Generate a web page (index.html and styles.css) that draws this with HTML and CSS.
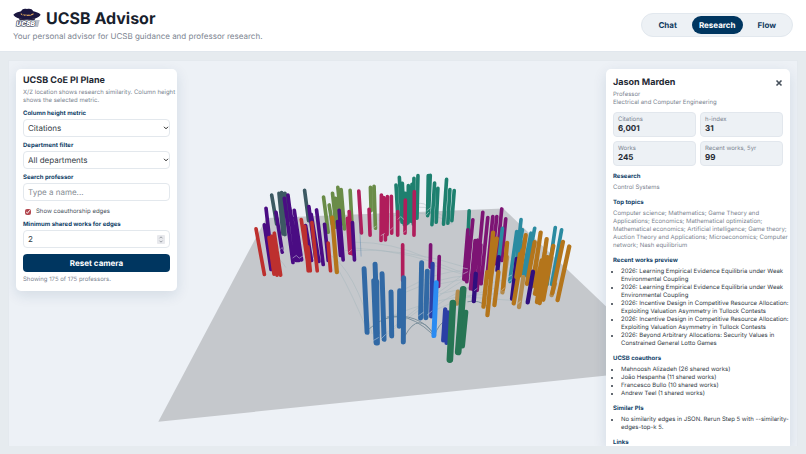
FILE: index.html
```html
<!DOCTYPE html>
<html lang="en">
<head>
<meta charset="utf-8">
<meta name="viewport" content="width=device-width, initial-scale=1">
<title>UCSB Advisor</title>
<link rel="stylesheet" href="styles.css">
</head>
<body>
<header class="topbar">
  <div class="brand">
    <div class="brand-row">
      <svg class="logo" viewBox="0 0 84 60" aria-hidden="true">
        <path d="M1 20C8 13 19 12 24 10C28 2 34 1 42 3C50 1 57 2 61 10C68 12 78 14 83 20C78 29 63 34 42 34C21 34 6 29 1 20Z" fill="#1b1740"/>
        <path d="M23 16Q42 25 62 16L61 20Q42 28 24 20Z" fill="#d9a25b"/>
        <path d="M28 18l4 5M38 21l3 4M50 21l4-4" stroke="#1b1740" stroke-width="3"/>
        <path d="M18 30Q42 38 67 30L64 38H20Z" fill="#2a2340"/>
        <path d="M12 36H80L75 57H7Z" fill="#b9c0cb"/>
        <text x="10" y="54" class="logo-text">UCSB</text>
      </svg>
      <h1>UCSB Advisor</h1>
    </div>
    <p class="tagline">Your personal advisor for UCSB guidance and professor research.</p>
  </div>
  <nav class="tabs" aria-label="Sections">
    <a href="#chat">Chat</a>
    <a href="#research" class="active" aria-current="page">Research</a>
    <a href="#flow">Flow</a>
  </nav>
</header>

<main class="stage">
  <svg class="scene" viewBox="-392 -300 2370 1158" preserveAspectRatio="xMidYMid slice" role="img" aria-label="Professor columns on a similarity plane">
    <path class="ground" d="M57 785L382 172L1095 144L1580 606L1580 628Z"/>
    <g class="edges">
      <path d="M600 330Q640 400 685 510M570 280Q650 330 700 520M620 270Q800 260 980 320M640 262Q820 270 980 340M650 245Q760 245 860 290M735 530Q900 400 1000 345M740 520Q860 420 985 335M790 400Q900 350 990 345M800 385Q900 330 980 330M850 470Q930 400 1020 370M860 465Q940 420 1080 380M730 480Q900 400 1090 400M720 180Q850 130 940 190M780 180Q860 80 880 170M800 160Q850 110 930 180M440 320Q410 270 390 310M905 370L1010 350M905 400L1090 360M870 310L1000 350M990 410L1120 420"/>
      <path class="edge-dark" d="M692 505Q780 425 880 520M745 470Q840 455 886 522M800 525Q840 450 886 522M888 525Q900 490 922 480M988 424Q1020 416 1050 440"/>
    </g>
    <g class="slate"><path d="M398 103L413 190M420 98L432 220M428 96L438 222M438 98L448 180M497 89L509 180"/></g>
    <g class="teal"><path d="M772 73L778 178M782 50L790 185M791 68L797 192M800 98L803 190M809 75L808 187M820 71L818 182M826 53L824 190M838 45L835 173M869 45L867 165M875 44L870 158M888 67L880 192M898 83L893 185M924 56L915 191M934 87L928 188M947 90L940 180M992 151L988 240"/></g>
    <g class="olive"><path d="M554 109L568 215M571 133L580 190M581 98L592 200M590 113L598 190M597 80L608 190M607 87L617 205M634 89L640 200M695 80L697 150M706 77L710 203"/></g>
    <g class="crimson"><path d="M660 91L668 217M691 146L694 224M728 103L727 240M735 111L735 215M741 115L740 238M746 108L745 222M758 107L759 218M777 153L777 224M800 118L799 218M827 93L826 224M631 153L641 280M626 173L633 278M792 253L792 360"/></g>
    <g class="purple"><path d="M381 143L402 328M376 193L396 327M411 155L430 275M436 113L462 306M447 103L472 300M452 140L480 300M458 170L474 300M466 149L488 298M510 138L530 290M517 161L540 303M533 148L553 312M500 195L518 300M557 191L568 300M601 149L613 298M596 183L605 285M641 186L647 298"/></g>
    <g class="red"><path d="M351 205L376 342M390 231L405 341M398 227L414 344M406 218L425 344M487 177L510 331M497 197L508 331M507 259L514 331M519 186L535 331M568 248L575 331"/></g>
    <g class="amber"><path d="M580 171L594 335"/></g>
    <g class="violet"><path d="M876 253L875 320M902 288L900 378"/></g>
    <g class="blue wide"><path d="M783 391L782 498M757 395L759 527M709 311L716 520M730 340L736 537M676 325L685 516M705 361L712 548M714 363L716 548M795 352L794 545M849 307L846 473M866 332L862 472"/></g>
    <g class="blue"><path d="M661 166L667 287"/></g>
    <g class="indigo"><path d="M882 310L878 468M920 447L914 540M928 456L924 548"/></g>
    <g class="bright wide"><path d="M893 367L886 526"/></g>
    <g class="violet"><path d="M1033 155L1020 300M1003 178L985 364M988 208L976 356M994 230L980 358M1048 171L1032 330M1063 168L1046 345M1075 168L1058 330M1090 145L1074 310M1102 175L1090 300M1010 240L996 385M1018 239L1004 388M1027 253L1016 390M1040 251L1028 370"/></g>
    <g class="cyan"><path d="M1148 177L1136 290M1135 213L1114 363M1152 208L1128 345M1158 240L1136 345M1092 203L1082 290M1189 203L1162 345M1178 218L1154 340M1251 201L1226 372M1270 208L1240 372"/></g>
    <g class="navy"><path d="M1081 290L1077 330M1135 295L1121 415M1012 340L1006 422"/></g>
    <g class="tan"><path d="M958 394L955 430M1106 290L1092 396M1155 350L1142 440M1219 380L1207 410M1250 370L1240 404"/></g>
    <g class="amber"><path d="M1064 216L1052 350M1075 234L1058 350M1106 247L1094 385M1060 330L1047 464M1046 335L1035 439M1080 335L1068 434M1162 224L1144 345M1145 280L1134 350M1152 270L1126 429M1207 216L1184 375M1189 245L1166 370M1203 245L1181 378M1210 300L1190 400M1225 236L1200 416M1219 276L1196 425M1228 290L1204 428M1245 256L1215 418M1274 244L1242 398M1293 258L1258 419"/></g>
    <g class="navy"><path d="M1184 334L1168 426"/></g>
    <g class="green broad"><path d="M974 387L959 575M943 428L934 598"/></g>
    <g class="green wide"><path d="M982 456L972 557"/></g>
    <g class="specks">
      <path d="M462 292l10-7l9 8l12-7M420 270l10-9l5 12M630 275l8-7M700 205l12-8M727 225l10-6M755 208l8-7M778 176l8-8l9 8M795 216l6-5M865 150l10-8M862 164l8-9M972 322l15 3M975 340l12-6M1008 390l8-6M1108 350l12-6M1108 366l10-8M1090 390l8-7M1138 430l9-8M705 540l14-8M728 535l12-12M840 466l14-10M866 464l14-12"/>
    </g>
  </svg>

  <form class="panel controls">
    <h2>UCSB CoE PI Plane</h2>
    <p class="muted intro">X/Z location shows research similarity. Column height shows the selected metric.</p>
    <label class="caption" for="metric">Column height metric</label>
    <div class="field">
      <select id="metric"><option>Citations</option><option>h-index</option><option>Works</option></select>
      <svg class="chevron" viewBox="0 0 6 4" aria-hidden="true"><path d="M1 .8L3 2.8L5 .8"/></svg>
    </div>
    <label class="caption" for="dept">Department filter</label>
    <div class="field">
      <select id="dept"><option>All departments</option></select>
      <svg class="chevron" viewBox="0 0 6 4" aria-hidden="true"><path d="M1 .8L3 2.8L5 .8"/></svg>
    </div>
    <label class="caption" for="search">Search professor</label>
    <div class="field"><input id="search" type="text" placeholder="Type a name..."></div>
    <label class="check"><input type="checkbox" checked><span>Show coauthorship edges</span></label>
    <label class="caption" for="minimum">Minimum shared works for edges</label>
    <div class="field">
      <input id="minimum" type="number" value="2">
      <svg class="spinner" viewBox="0 0 8 9" aria-hidden="true"><rect width="8" height="9" rx="1"/><path d="M2.5 3.3L4 1.8L5.5 3.3M2.5 5.7L4 7.2L5.5 5.7"/></svg>
    </div>
    <button class="reset" type="button">Reset camera</button>
    <p class="muted status">Showing 175 of 175 professors.</p>
  </form>

  <aside class="panel details">
    <div class="details-head">
      <h2>Jason Marden</h2>
      <button class="close" type="button" aria-label="Close"><svg viewBox="0 0 8 8" aria-hidden="true"><path d="M1.5 1.5L6.5 6.5M6.5 1.5L1.5 6.5"/></svg></button>
    </div>
    <p class="muted">Professor<br>Electrical and Computer Engineering</p>
    <dl class="stats">
      <div><dt>Citations</dt><dd>6,001</dd></div>
      <div><dt>h-index</dt><dd>31</dd></div>
      <div><dt>Works</dt><dd>245</dd></div>
      <div><dt>Recent works, 5yr</dt><dd>99</dd></div>
    </dl>
    <h3>Research</h3>
    <p class="muted">Control Systems</p>
    <h3>Top topics</h3>
    <p class="muted">Computer science; Mathematics; Game Theory and Applications; Economics; Mathematical optimization; Mathematical economics; Artificial intelligence; Game theory; Auction Theory and Applications; Microeconomics; Computer network; Nash equilibrium</p>
    <h3>Recent works preview</h3>
    <ul>
      <li>2026: Learning Empirical Evidence Equilibria under Weak Environmental Coupling</li>
      <li>2026: Learning Empirical Evidence Equilibria under Weak Environmental Coupling</li>
      <li>2026: Incentive Design in Competitive Resource Allocation: Exploiting Valuation Asymmetry in Tullock Contests</li>
      <li>2026: Incentive Design in Competitive Resource Allocation: Exploiting Valuation Asymmetry in Tullock Contests</li>
      <li>2026: Beyond Arbitrary Allocations: Security Values in Constrained General Lotto Games</li>
    </ul>
    <h3>UCSB coauthors</h3>
    <ul>
      <li>Mahnoosh Alizadeh (26 shared works)</li>
      <li>João Hespanha (11 shared works)</li>
      <li>Francesco Bullo (10 shared works)</li>
      <li>Andrew Teel (1 shared works)</li>
    </ul>
    <h3>Similar PIs</h3>
    <ul>
      <li>No similarity edges in JSON. Rerun Step 5 with --similarity-edges-top-k 5.</li>
    </ul>
    <h3>Links</h3>
  </aside>
</main>
</body>
</html>
```
FILE: styles.css
```css
* { box-sizing: border-box; }

body {
  margin: 0;
  height: 100vh;
  display: flex;
  flex-direction: column;
  overflow: hidden;
  background: #e6ebef;
  color: #1f2933;
  font-family: Inter, "Liberation Sans", sans-serif;
  font-size: 6px;
  line-height: 8px;
  text-rendering: geometricPrecision;
}

h1, h2, h3, p, ul, dl, dd { margin: 0; }

.topbar {
  display: flex;
  justify-content: space-between;
  align-items: center;
  padding: 8px 13px 10px;
  background: #fff;
  border-bottom: 1px solid #e1e7ed;
}

.brand-row { display: flex; align-items: center; gap: 5px; }
.logo { width: 28px; height: 20px; }
.logo-text {
  font: italic 900 20px Inter, sans-serif;
  fill: #fff;
  stroke: #303548;
  stroke-width: 3px;
  paint-order: stroke;
}
h1 { font-size: 16px; line-height: 20px; font-weight: 700; color: #17202c; }
.tagline { margin-top: 3px; font-size: 8px; line-height: 10px; color: #7b8490; }

.tabs {
  display: flex;
  gap: 1px;
  padding: 2px;
  border: 1px solid #e2e8ee;
  border-radius: 12px;
  background: #edf1f5;
}
.tabs a {
  padding: 4px 14px;
  border-radius: 10px;
  color: #123b61;
  font-size: 8px;
  line-height: 10px;
  font-weight: 700;
  text-decoration: none;
}
.tabs .active { padding: 4px 7px; background: #003660; color: #fff; }

.stage {
  position: relative;
  flex: 1;
  min-height: 0;
  display: flex;
  justify-content: space-between;
  align-items: flex-start;
  margin: 8px;
  padding: 8px 7px 0;
  overflow: hidden;
  background: #edf1f6;
  border: 1px solid #e4e9ee;
  border-bottom: 0;
}
.scene { position: absolute; inset: 0; width: 100%; height: 100%; }

.ground { fill: #c5c8cc; }
.edges { fill: none; stroke: #a4b6bd; stroke-width: 2; opacity: .7; }
.edge-dark { stroke: #5d7888; stroke-width: 3; }
.scene g path { stroke-linecap: round; fill: none; }
.slate, .teal, .olive, .crimson, .purple, .red, .violet, .cyan { stroke-width: 11; }
.amber, .tan, .navy, .indigo { stroke-width: 13; }
.wide { stroke-width: 15; }
.broad { stroke-width: 20; }
.slate { stroke: #3c5963; }
.teal { stroke: #1e806f; }
.olive { stroke: #6a8c48; }
.crimson { stroke: #b01d5b; }
.purple { stroke: #4a0c83; }
.red { stroke: #bd302e; }
.amber { stroke: #b4751b; }
.violet { stroke: #7d1474; }
.blue { stroke: #3169a5; }
.indigo { stroke: #2b3fa5; }
.bright { stroke: #2a8bf2; }
.cyan { stroke: #2b8ba1; }
.navy { stroke: #300f7e; }
.tan { stroke: #b38b4e; }
.green { stroke: #277554; }
.specks { stroke: #d6dce2; stroke-width: 2; opacity: .75; }

.panel {
  position: relative;
  padding: 7px;
  border-radius: 5px;
  background: #fff;
  box-shadow: 0 4px 14px rgba(20, 60, 100, .12);
}
.controls { width: 161px; padding-right: 0; }
.controls > :not(.intro) { margin-right: 7px; }
.details {
  width: 184px;
  height: 100%;
  padding-right: 0;
  padding-bottom: 0;
  overflow: hidden;
  border-radius: 5px 5px 0 0;
}

h2 { font-size: 9px; line-height: 10px; font-weight: 700; }
h3 { margin: 7px 0 3px; font-size: 6px; line-height: 8px; font-weight: 700; color: #123f68; }
.muted { color: #7b8490; }
.controls h2 { margin-bottom: 3px; }

.caption {
  display: block;
  margin: 5px 0 1px;
  color: #123f68;
  font-weight: 700;
}
.field { position: relative; }
.field select, .field input {
  display: block;
  width: 100%;
  height: 18px;
  margin: 0;
  padding: 0 4px;
  border: 1px solid #e3e8ed;
  border-radius: 4px;
  background: #fff;
  color: #323a44;
  font: 8px/10px Inter, "Liberation Sans", sans-serif;
  text-rendering: inherit;
  appearance: none;
}
.field input::placeholder { color: #858b93; }
.field input::-webkit-inner-spin-button { display: none; }
.chevron, .spinner { position: absolute; pointer-events: none; }
.chevron { right: 1px; top: 7px; width: 6px; height: 4px; fill: none; stroke: #222; }
.spinner { right: 5px; top: 5px; width: 8px; height: 9px; stroke: #777d85; stroke-width: .7; }
.spinner rect { fill: #e8e9ed; stroke: none; }
.spinner path { fill: none; }

.check { display: flex; align-items: center; gap: 5px; margin: 7px 0 0 2px; color: #46505b; }
.check input { width: 6px; height: 6px; margin: 0; accent-color: #b34850; }

.reset {
  display: block;
  width: 147px;
  height: 18px;
  margin: 6px 0 4px;
  padding: 0;
  border: 0;
  border-radius: 4px;
  background: #003660;
  color: #fff;
  font: 700 8px/10px Inter, "Liberation Sans", sans-serif;
  text-rendering: inherit;
}

.details-head {
  display: flex;
  justify-content: space-between;
  align-items: center;
  margin: 2px 7px 3px 0;
}
.close { width: 8px; height: 8px; padding: 0; border: 0; background: none; display: flex; }
.close svg { width: 8px; height: 8px; stroke: #46505b; stroke-width: 1.6; }

.stats { display: grid; grid-template-columns: 1fr 1fr; gap: 4px; margin: 5px 7px 0 0; }
.stats div { padding: 3px 4px; border: 1px solid #e2e7ed; border-radius: 4px; background: #edf1f5; }
.stats dt { color: #7b8490; line-height: 8px; }
.stats dd { font-size: 8px; line-height: 9px; font-weight: 700; }

ul { padding-left: 8px; color: #303943; }
```
